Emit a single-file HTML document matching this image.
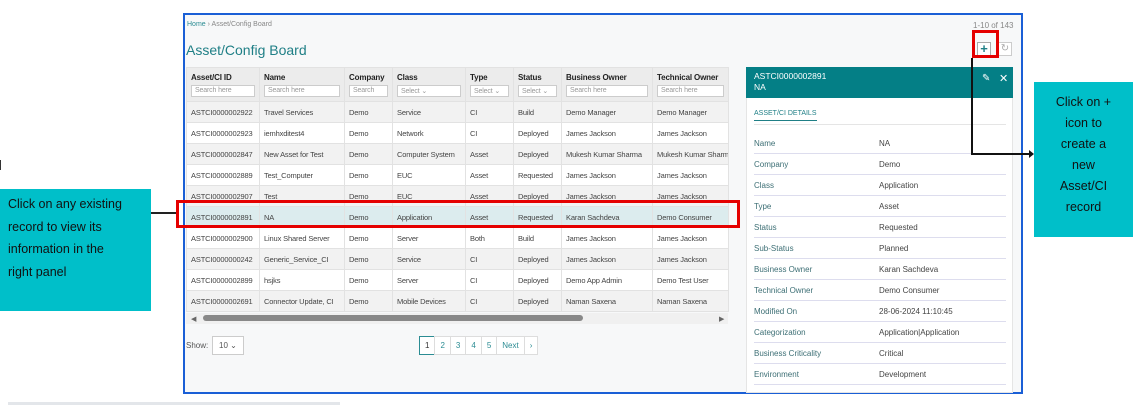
<!DOCTYPE html>
<html><head><style>
*{margin:0;padding:0;box-sizing:border-box}
body{width:1134px;height:405px;background:#fff;position:relative;overflow:hidden;font-family:"Liberation Sans",sans-serif;font-size:8px;color:#333}
.a{position:absolute}
#frame{left:183px;top:13px;width:840px;height:381px;border:2px solid #1a5fd6;background:#f7f8f9}
table{border-collapse:collapse;position:absolute;left:186px;top:67px;width:542px;table-layout:fixed}
td,th{border:1px solid #e2e2e2;padding:0 4px;white-space:nowrap;overflow:hidden;text-align:left;font-weight:normal;font-size:7.5px;letter-spacing:-0.15px}
th{background:#ececec;height:34px;vertical-align:top;padding-top:5px;color:#222;font-weight:bold;font-size:8px}
th .s{display:block;margin-top:3px;height:12px;border:1px solid #ccc;background:#fff;font-weight:normal;color:#999;font-size:7px;padding:1px 3px}
td{height:21px;background:#fff;color:#444}
tr.g td{background:#f2f2f2}
tr.sel td{background:#dcecee}
.dl{position:absolute;left:754px;width:252px;height:21px;border-bottom:1px solid #dde;font-size:8px;line-height:21px}
.dl span{position:absolute;left:125px;color:#444}
.dl{color:#3d6f75}
.pg{display:inline-block;border:1px solid #ddd;height:19px;line-height:17px;padding:0 5px;color:#2b8c93;background:#fff;margin-left:-1px}
</style></head><body>
<div class="a" style="left:0;top:160px;width:1px;height:10px;background:#333"></div>
<div class="a" id="frame"></div>
<div class="a" style="left:187px;top:21px;font-size:7px;color:#888"><span style="color:#2b8c93">Home</span> › Asset/Config Board</div>
<div class="a" style="left:186px;top:42px;font-size:14px;color:#1f7f86">Asset/Config Board</div>
<div class="a" style="left:973px;top:21px;font-size:8px;color:#888">1-10 of 143</div>
<div class="a" style="left:977px;top:42px;width:14px;height:14px;border:1px solid #aaa;background:#fff;color:#1f7f86;font-size:13px;font-weight:bold;line-height:12px;text-align:center">+</div>
<div class="a" style="left:998px;top:42px;width:14px;height:14px;border:1px solid #ccc;background:#fff;color:#aaa;font-size:10px;line-height:12px;text-align:center">↻</div>
<table>
<colgroup><col style="width:73px"><col style="width:85px"><col style="width:48px"><col style="width:73px"><col style="width:48px"><col style="width:48px"><col style="width:91px"><col style="width:76px"></colgroup>
<tr><th>Asset/CI ID<span class="s">Search here</span></th><th>Name<span class="s">Search here</span></th><th>Company<span class="s">Search</span></th><th>Class<span class="s">Select ⌄</span></th><th>Type<span class="s">Select ⌄</span></th><th>Status<span class="s">Select ⌄</span></th><th>Business Owner<span class="s">Search here</span></th><th>Technical Owner<span class="s">Search here</span></th></tr>
<tr class="g"><td>ASTCI0000002922</td><td>Travel Services</td><td>Demo</td><td>Service</td><td>CI</td><td>Build</td><td>Demo Manager</td><td>Demo Manager</td></tr>
<tr><td>ASTCI0000002923</td><td>iemhxditest4</td><td>Demo</td><td>Network</td><td>CI</td><td>Deployed</td><td>James Jackson</td><td>James Jackson</td></tr>
<tr class="g"><td>ASTCI0000002847</td><td>New Asset for Test</td><td>Demo</td><td>Computer System</td><td>Asset</td><td>Deployed</td><td>Mukesh Kumar Sharma</td><td>Mukesh Kumar Sharma</td></tr>
<tr><td>ASTCI0000002889</td><td>Test_Computer</td><td>Demo</td><td>EUC</td><td>Asset</td><td>Requested</td><td>James Jackson</td><td>James Jackson</td></tr>
<tr class="g"><td>ASTCI0000002907</td><td>Test</td><td>Demo</td><td>EUC</td><td>Asset</td><td>Deployed</td><td>James Jackson</td><td>James Jackson</td></tr>
<tr class="sel"><td>ASTCI0000002891</td><td>NA</td><td>Demo</td><td>Application</td><td>Asset</td><td>Requested</td><td>Karan Sachdeva</td><td>Demo Consumer</td></tr>
<tr><td>ASTCI0000002900</td><td>Linux Shared Server</td><td>Demo</td><td>Server</td><td>Both</td><td>Build</td><td>James Jackson</td><td>James Jackson</td></tr>
<tr class="g"><td>ASTCI0000000242</td><td>Generic_Service_CI</td><td>Demo</td><td>Service</td><td>CI</td><td>Deployed</td><td>James Jackson</td><td>James Jackson</td></tr>
<tr><td>ASTCI0000002899</td><td>hsjks</td><td>Demo</td><td>Server</td><td>CI</td><td>Deployed</td><td>Demo App Admin</td><td>Demo Test User</td></tr>
<tr class="g"><td>ASTCI0000002691</td><td>Connector Update, CI</td><td>Demo</td><td>Mobile Devices</td><td>CI</td><td>Deployed</td><td>Naman Saxena</td><td>Naman Saxena</td></tr>
</table>
<div class="a" style="left:186px;top:313px;width:542px;height:11px;background:#f0f0f0"></div>
<div class="a" style="left:191px;top:315px;font-size:7px;color:#666">◀</div>
<div class="a" style="left:719px;top:315px;font-size:7px;color:#666">▶</div>
<div class="a" style="left:203px;top:315px;width:380px;height:6px;border-radius:3px;background:#888"></div>
<div class="a" style="left:186px;top:341px;font-size:8px;color:#555">Show:</div>
<div class="a" style="left:212px;top:336px;width:32px;height:19px;border:1px solid #ccc;background:#fff;font-size:8px;line-height:17px;padding-left:6px;color:#555">10 ⌄</div>
<div class="a" style="left:420px;top:336px;font-size:8px"><span class="pg" style="border-color:#2b8c93;color:#333">1</span><span class="pg">2</span><span class="pg">3</span><span class="pg">4</span><span class="pg">5</span><span class="pg">Next</span><span class="pg">›</span></div>
<div class="a" style="left:746px;top:67px;width:267px;height:326px;background:#fff;border:1px solid #e5e5e5"></div>
<div class="a" style="left:746px;top:67px;width:267px;height:31px;background:#047f86;color:#fff;font-size:8.5px;padding:4px 8px;line-height:11px">ASTCI0000002891<br>NA</div>
<div class="a" style="left:982px;top:73px;color:#fff;font-size:10px">✎</div>
<div class="a" style="left:999px;top:72px;color:#fff;font-size:11px">✕</div>
<div class="a" style="left:754px;top:110px;font-size:7px;color:#1f7f86;border-bottom:1px solid #1f7f86;padding-bottom:3px">ASSET/CI DETAILS</div>
<div class="a" style="left:754px;top:124px;width:252px;height:1px;background:#e5e5e5"></div>
<div class="dl" style="top:133px">Name<span>NA</span></div>
<div class="dl" style="top:154px">Company<span>Demo</span></div>
<div class="dl" style="top:175px">Class<span>Application</span></div>
<div class="dl" style="top:196px">Type<span>Asset</span></div>
<div class="dl" style="top:217px">Status<span>Requested</span></div>
<div class="dl" style="top:238px">Sub-Status<span>Planned</span></div>
<div class="dl" style="top:259px">Business Owner<span>Karan Sachdeva</span></div>
<div class="dl" style="top:280px">Technical Owner<span>Demo Consumer</span></div>
<div class="dl" style="top:301px">Modified On<span>28-06-2024 11:10:45</span></div>
<div class="dl" style="top:322px">Categorization<span>Application|Application</span></div>
<div class="dl" style="top:343px">Business Criticality<span>Critical</span></div>
<div class="dl" style="top:364px">Environment<span>Development</span></div>
<div class="a" style="left:176px;top:200px;width:564px;height:28px;border:3px solid #e50000"></div>
<div class="a" style="left:972px;top:30px;width:27px;height:28px;border:3px solid #e50000"></div>
<div class="a" style="left:0;top:189px;width:151px;height:122px;background:#00bfc9;color:#111;font-size:12.5px;line-height:22.5px;padding:4px 22px 4px 8px">Click on any existing record to view its information in the right panel</div>
<div class="a" style="left:151px;top:212px;width:25px;height:2px;background:#222"></div>
<div class="a" style="left:1034px;top:82px;width:99px;height:155px;background:#00bfc9;color:#111;font-size:12.5px;line-height:21px;text-align:center;padding-top:10px">Click on +<br>icon to<br>create a<br>new<br>Asset/CI<br>record</div>
<div class="a" style="left:971px;top:58px;width:2px;height:96px;background:#111"></div>
<div class="a" style="left:971px;top:153px;width:60px;height:2px;background:#111"></div>
<div class="a" style="left:1029px;top:150px;width:0;height:0;border-top:4px solid transparent;border-bottom:4px solid transparent;border-left:5px solid #111"></div>
<div class="a" style="left:8px;top:402px;width:332px;height:3px;background:#e3e6ea"></div>
</body></html>
